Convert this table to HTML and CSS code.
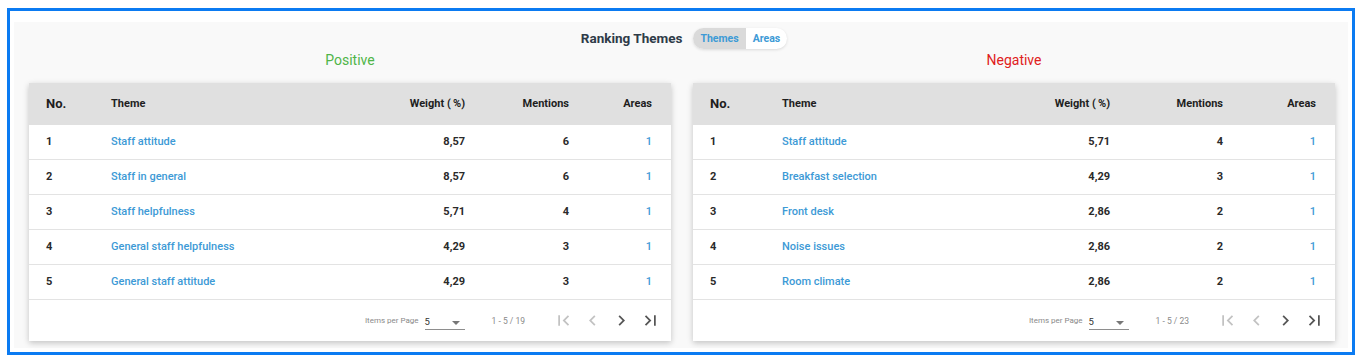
FILE: index.html
```html
<!DOCTYPE html>
<html>
    <head>
        <title>Ranking Themes</title>
        <link rel="stylesheet" href="styles.css">
    </head>
    <body>
        <div class="frame">
            <div class="panel">
                <div class="heading">
                    <span class="heading-title">Ranking Themes</span>
                    <div class="toggle">
                        <span class="toggle-item active">Themes</span>
                        <span class="toggle-item">Areas</span>
                    </div>
                </div>
                <div class="columns">
                    <div class="column">
                        <p class="label positive">Positive</p>
                        <div class="card">
                            <table class="ranking pos">
                                <colgroup>
                                    <col class="c-no"><col class="c-theme"><col class="c-weight"><col class="c-mentions"><col class="c-areas">
                                </colgroup>
                                <thead>
                                    <tr><th class="no">No.</th><th>Theme</th><th class="num">Weight (&thinsp;%)</th><th class="num">Mentions</th><th class="num last">Areas</th></tr>
                                </thead>
                                <tbody>
                                    <tr><td class="no">1</td><td class="link">Staff attitude</td><td class="num">8,57</td><td class="num">6</td><td class="num last link">1</td></tr>
                                    <tr><td class="no">2</td><td class="link">Staff in general</td><td class="num">8,57</td><td class="num">6</td><td class="num last link">1</td></tr>
                                    <tr><td class="no">3</td><td class="link">Staff helpfulness</td><td class="num">5,71</td><td class="num">4</td><td class="num last link">1</td></tr>
                                    <tr><td class="no">4</td><td class="link">General staff helpfulness</td><td class="num">4,29</td><td class="num">3</td><td class="num last link">1</td></tr>
                                    <tr><td class="no">5</td><td class="link">General staff attitude</td><td class="num">4,29</td><td class="num">3</td><td class="num last link">1</td></tr>
                                </tbody>
                            </table>
                            <div class="pager">
                                <span class="pager-label">Items per Page</span>
                                <span class="pager-select">5<span class="caret"></span></span>
                                <span class="pager-range">1 - 5 / 19</span>
                                <span class="pager-btn off"><svg viewBox="0 0 24 24"><path d="M18.41 16.59L13.82 12l4.59-4.59L17 6l-6 6 6 6zM6 6h2v12H6z"/></svg></span>
                                <span class="pager-btn off"><svg viewBox="0 0 24 24"><path d="M15.41 7.41L14 6l-6 6 6 6 1.41-1.41L10.83 12z"/></svg></span>
                                <span class="pager-btn"><svg viewBox="0 0 24 24"><path d="M10 6L8.59 7.41 13.17 12l-4.58 4.59L10 18l6-6z"/></svg></span>
                                <span class="pager-btn"><svg viewBox="0 0 24 24"><path d="M5.59 7.41L10.18 12l-4.59 4.59L7 18l6-6-6-6zM16 6h2v12h-2z"/></svg></span>
                            </div>
                        </div>
                    </div>
                    <div class="column">
                        <p class="label negative">Negative</p>
                        <div class="card">
                            <table class="ranking neg">
                                <colgroup>
                                    <col class="c-no"><col class="c-theme"><col class="c-weight"><col class="c-mentions"><col class="c-areas">
                                </colgroup>
                                <thead>
                                    <tr><th class="no">No.</th><th>Theme</th><th class="num">Weight (&thinsp;%)</th><th class="num">Mentions</th><th class="num last">Areas</th></tr>
                                </thead>
                                <tbody>
                                    <tr><td class="no">1</td><td class="link">Staff attitude</td><td class="num">5,71</td><td class="num">4</td><td class="num last link">1</td></tr>
                                    <tr><td class="no">2</td><td class="link">Breakfast selection</td><td class="num">4,29</td><td class="num">3</td><td class="num last link">1</td></tr>
                                    <tr><td class="no">3</td><td class="link">Front desk</td><td class="num">2,86</td><td class="num">2</td><td class="num last link">1</td></tr>
                                    <tr><td class="no">4</td><td class="link">Noise issues</td><td class="num">2,86</td><td class="num">2</td><td class="num last link">1</td></tr>
                                    <tr><td class="no">5</td><td class="link">Room climate</td><td class="num">2,86</td><td class="num">2</td><td class="num last link">1</td></tr>
                                </tbody>
                            </table>
                            <div class="pager">
                                <span class="pager-label">Items per Page</span>
                                <span class="pager-select">5<span class="caret"></span></span>
                                <span class="pager-range">1 - 5 / 23</span>
                                <span class="pager-btn off"><svg viewBox="0 0 24 24"><path d="M18.41 16.59L13.82 12l4.59-4.59L17 6l-6 6 6 6zM6 6h2v12H6z"/></svg></span>
                                <span class="pager-btn off"><svg viewBox="0 0 24 24"><path d="M15.41 7.41L14 6l-6 6 6 6 1.41-1.41L10.83 12z"/></svg></span>
                                <span class="pager-btn"><svg viewBox="0 0 24 24"><path d="M10 6L8.59 7.41 13.17 12l-4.58 4.59L10 18l6-6z"/></svg></span>
                                <span class="pager-btn"><svg viewBox="0 0 24 24"><path d="M5.59 7.41L10.18 12l-4.59 4.59L7 18l6-6-6-6zM16 6h2v12h-2z"/></svg></span>
                            </div>
                        </div>
                    </div>
                </div>
            </div>
        </div>
    </body>
</html>
```

FILE: styles.css
```css
body {
    margin: 0;
    background: #ffffff;
    font-family: Roboto, "Liberation Sans", sans-serif;
}
.frame {
    width: 1348px;
    height: 347px;
    margin: 8px 0 0 7px;
    border: 3px solid #0b7bf2;
    padding: 11px 4px 0 4px;
    box-sizing: border-box;
}
.panel {
    background: #f9f9f9;
    height: 326px;
    padding: 6px 12px 0 15px;
    box-sizing: border-box;
}
.heading {
    display: flex;
    justify-content: center;
    align-items: center;
    gap: 11px;
    height: 21px;
    padding-left: 3px;
}
.heading-title {
    font-size: 13.5px;
    font-weight: 700;
    color: #2e3b48;
    margin-top: -1px;
}
.toggle {
    display: flex;
    height: 21px;
    border-radius: 11px;
    overflow: hidden;
    background: #ffffff;
    box-shadow: 0 1px 3px rgba(0, 0, 0, 0.12);
}
.toggle-item {
    display: flex;
    align-items: center;
    padding: 0 7px;
    font-size: 10.5px;
    font-weight: 700;
    color: #3d9ad6;
}
.toggle-item.active {
    background: #dadada;
}
.columns {
    display: grid;
    grid-template-columns: 642px 642px;
    gap: 22px;
}
.label {
    margin: 2px 0 14px 0;
    height: 18px;
    line-height: 18px;
    text-align: center;
    font-size: 14px;
}
.positive {
    color: #4fb548;
}
.negative {
    color: #e02020;
}
.card {
    background: #ffffff;
    box-shadow: 0 2px 6px rgba(0, 0, 0, 0.22);
}
.ranking {
    width: 642px;
    table-layout: fixed;
    border-collapse: collapse;
}
.ranking th {
    height: 40px;
    background: #e0e0e0;
    font-size: 11px;
    font-weight: 700;
    color: #1e1e1e;
    text-align: left;
    padding: 0 0 2px 0;
}
.ranking th.no {
    font-size: 13px;
    padding-left: 17px;
}
.ranking td {
    height: 32px;
    border-bottom: 1px solid #e3e3e3;
    font-size: 11px;
    font-weight: 700;
    color: #2a2a2a;
    padding: 0 0 2px 0;
}
.ranking td.no {
    padding-left: 17px;
}
.ranking .num {
    text-align: right;
}
.ranking th.last,
.ranking td.last {
    padding-right: 19px;
}
.ranking td.link {
    color: #3d9ad6;
    font-weight: 500;
}
.pos .c-no { width: 82px; }
.pos .c-weight { width: 100px; }
.pos .c-mentions { width: 104px; }
.pos .c-areas { width: 102px; }
.neg .c-no { width: 89px; }
.neg .c-weight { width: 100px; }
.neg .c-mentions { width: 113px; }
.neg .c-areas { width: 112px; }
.pager {
    display: flex;
    justify-content: flex-end;
    align-items: center;
    height: 41px;
    padding-right: 6px;
    font-size: 8px;
    color: #8a8a8a;
}
.pager-label {
    margin-right: 6px;
}
.pager-select {
    position: relative;
    width: 40px;
    height: 14px;
    line-height: 14px;
    margin-top: 4px;
    border-bottom: 1px solid #8e8e8e;
    color: #333333;
    font-size: 9.5px;
}
.caret {
    position: absolute;
    right: 5px;
    top: 6px;
    border-left: 4px solid transparent;
    border-right: 4px solid transparent;
    border-top: 4px solid #777777;
}
.pager-range {
    margin: 0 24px 0 27px;
    font-size: 8.5px;
    color: #8a8a8a;
}
.pager-btn {
    display: flex;
    justify-content: center;
    width: 29px;
}
.pager-btn svg {
    width: 21px;
    height: 21px;
    fill: #555555;
}
.pager-btn.off svg {
    fill: #c2c2c2;
}
```
